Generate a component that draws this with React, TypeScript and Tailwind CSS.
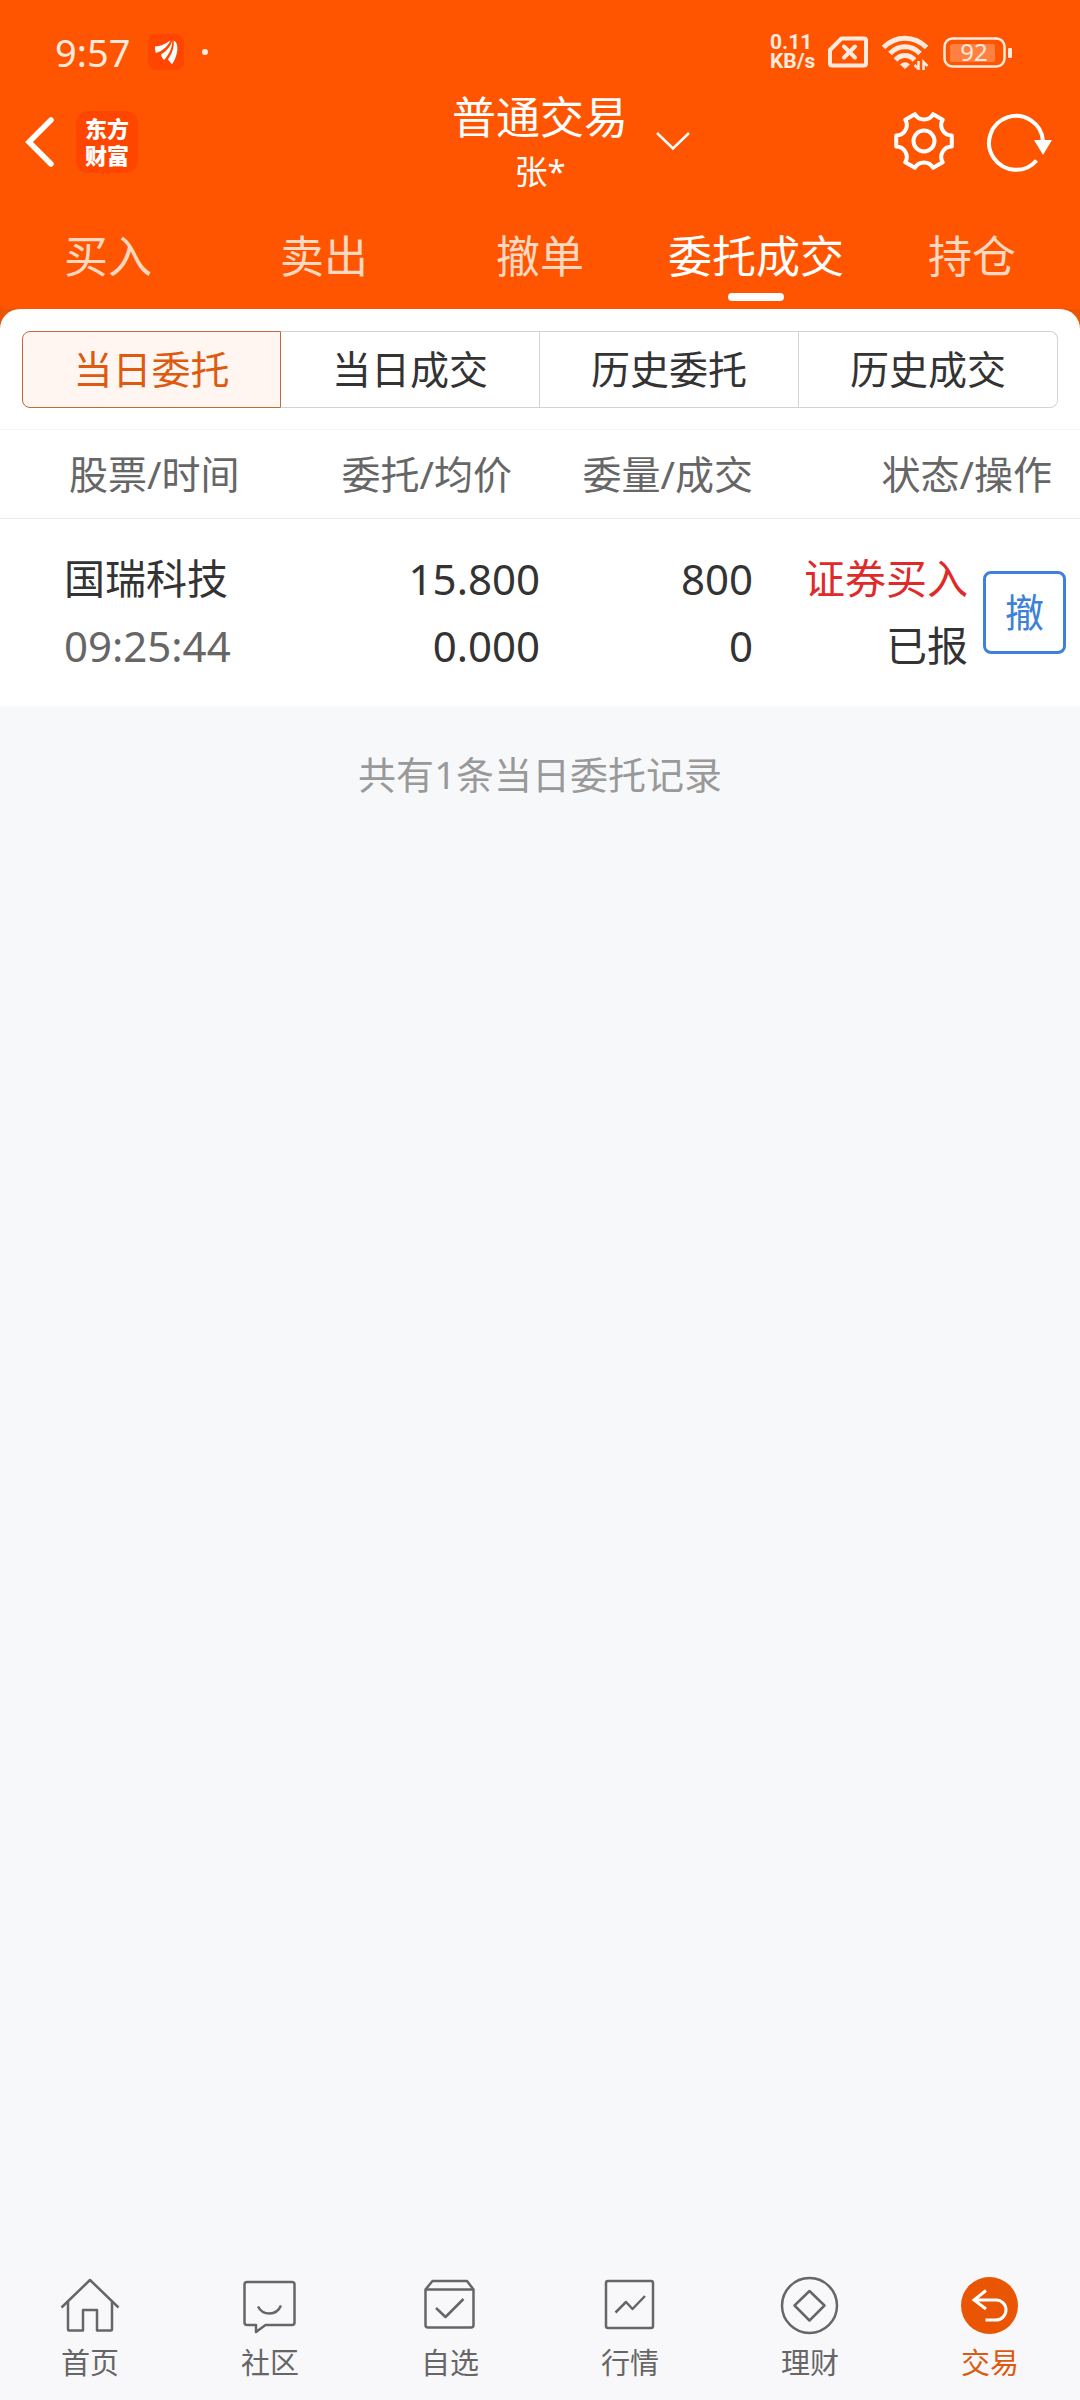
import type { ReactNode } from "react"
import clsx from "clsx"

interface NavItem {
  label: string;
  icon: ReactNode;
}

interface Order {
  name: string;
  time: string;
  price: string;
  avgPrice: string;
  amount: number;
  filled: number;
  side: string;
  status: string;
}

const TABS = ["买入", "卖出", "撤单", "委托成交", "持仓"]
const SEGMENTS = ["当日委托", "当日成交", "历史委托", "历史成交"]

const ORDERS: Order[] = [
  {
    name: "国瑞科技",
    time: "09:25:44",
    price: "15.800",
    avgPrice: "0.000",
    amount: 800,
    filled: 0,
    side: "证券买入",
    status: "已报",
  },
]

const NAV_ITEMS: NavItem[] = [
  {
    label: "首页",
    icon: (
      <>
        <path d="M1.500 32.500 30 5l28.500 27.500" />
        <path d="M8 27v27.500q0 1 1 1h14V35h14v20.500h14q1 0 1-1V27" />
      </>
    ),
  },
  {
    label: "社区",
    icon: (
      <>
        <path d="M7 7h45q2.500 0 2.500 2.500v38q0 2.500-2.500 2.500H25.500l-9.500 7v-7H7Q4.500 50 4.500 47.500v-38Q4.500 7 7 7z" />
        <path d="M18 31.500q3.500 7 11.500 7t11.500-8" />
      </>
    ),
  },
  {
    label: "自选",
    icon: (
      <>
        <path d="M5.500 14.500 12.500 6h34.500l6.500 8.500V50q0 2.500-2.500 2.500H8Q5.500 52.500 5.500 50z" />
        <path d="M5.500 14.500h48M16 33l9.500 9L43.500 24" />
      </>
    ),
  },
  {
    label: "行情",
    icon: (
      <>
        <rect x="6" y="6" width="47" height="47" rx="2" />
        <path d="m15.500 37.500 10.500-10.500 6.500 7 12.500-13" />
      </>
    ),
  },
  {
    label: "理财",
    icon: (
      <>
        <circle cx="29.500" cy="30.500" r="27.500" />
        <path d="m29.500 16 15 14.500-15 15-15-15z" />
      </>
    ),
  },
  {
    label: "交易",
    icon: (
      <>
        <circle cx="29.500" cy="30.500" r="28.500" fill="#ea5504" stroke="none" />
        <path
          d="M25.500 45h10.500a10 10 0 0 0 0-20H14M26 15.500l-12 9.500 12 9"
          stroke="#fff"
          strokeWidth="3"
          strokeLinejoin="miter"
        />
      </>
    ),
  },
]

function StatusBar() {
  return (
    <div className="flex h-[86px] items-center justify-between pt-[18px] pr-[67px] pl-[55px] text-[#ffeadd]">
      <div className="flex items-center">
        <span className="text-[38px] leading-[40px]">9:57</span>
        <svg className="ml-[18px] size-9" viewBox="0 0 36 36" aria-hidden="true">
          <rect width="36" height="36" rx="8" fill="#ff4600" />
          <g fill="#fff">
            <path d="M7 12.500C12 12.500 18 9.500 22.500 6.500 20 12 15 17 8 19 7 17 6.800 15 7 12.500z" />
            <path d="M24.300 6.500C24.500 14 20.500 21.500 16 26 14.500 24.500 13.300 22.500 13 20.500 18 17.500 22.500 13 24.300 6.500z" />
            <path d="M25.800 6.500C28.500 8 29.800 11 29.300 16.500 28.500 22 26.500 27 24 30.300 22.500 28.500 21 27 20 25.300 24 20 26.300 13 25.800 6.500z" />
          </g>
        </svg>
        <span className="ml-[18px] size-1.5 rounded-full bg-current" />
      </div>

      <div className="flex items-center">
        <p className="w-[50px] font-[Roboto,sans-serif] text-[21px] leading-[19px] font-bold">0.11 KB/s</p>
        <svg className="ml-2 h-8 w-10" viewBox="0 0 40 32" fill="none" stroke="currentColor" strokeWidth="4" aria-hidden="true">
          <path d="M13.500 2.500H36q2 0 2 2v23q0 2-2 2H4q-2 0-2-2V14z" strokeLinejoin="round" />
          <path d="m16 10.500 11 11m0-11-11 11" strokeLinecap="round" />
        </svg>
        <svg className="ml-3.5 h-9 w-12" viewBox="0 0 48 36" fill="none" stroke="currentColor" strokeWidth="5" aria-hidden="true">
          <path d="M1.500 13.500Q10.500 4.200 23 4.200t21.500 9.300" />
          <path d="M8 19.500Q14.500 12.800 23 12.800t15 6.700" />
          <path d="M13.500 26Q17.500 21.500 23 21.500t9.500 4.500" />
          <path d="M18 30.500q5-4.500 10 0l-5 4.500z" fill="currentColor" stroke="none" />
          <path d="M36.500 27v8l-4-4M41.500 36v-8l4 4" strokeWidth="2.500" />
        </svg>
        <svg className="ml-[13px] h-8 w-[70px]" viewBox="0 0 70 32" aria-hidden="true">
          <rect x="1.500" y="2.500" width="60" height="28" rx="8" fill="none" stroke="currentColor" strokeWidth="2.500" />
          <rect x="7" y="8" width="45" height="18" rx="2" fill="#ff8040" />
          <rect x="65" y="12" width="4" height="10" rx="1" fill="currentColor" />
          <text x="31" y="25" textAnchor="middle" fontSize="24" fill="currentColor">92</text>
        </svg>
      </div>
    </div>
  )
}

function TitleBar() {
  return (
    <div className="grid h-28 grid-cols-[1fr_auto_1fr] items-center">
      <div className="flex items-center pl-6">
        <button type="button" aria-label="返回">
          <svg className="h-[52px] w-8" viewBox="0 0 32 52" fill="none" stroke="#fff" strokeWidth="5.500" strokeLinecap="round" strokeLinejoin="miter">
            <path d="M27 4 5 26l22 22" />
          </svg>
        </button>
        <div className="ml-5 flex size-[62px] flex-col items-center justify-center rounded-xl bg-[#ff4600] text-[22px] leading-[27px] font-black">
          <span>东方</span>
          <span>财富</span>
        </div>
      </div>

      <div className="text-center">
        <h1 className="text-[44px] leading-[60px]">普通交易</h1>
        <p className="text-[33px] leading-[50px]">张*</p>
      </div>

      <div className="flex items-center justify-between pr-7 pl-7">
        <button type="button" aria-label="切换账户">
          <svg className="h-5 w-[34px]" viewBox="0 0 34 20" fill="none" stroke="#fff" strokeWidth="2.500">
            <path d="m1 1 16 15.500L33 1" />
          </svg>
        </button>
        <div className="flex items-center gap-8">
          <button type="button" aria-label="设置">
            <svg className="size-[60px]" viewBox="0 0 60 60" fill="none" stroke="#fff" strokeWidth="4" strokeLinejoin="round">
              <path d="M57.800 34.500A10.500 10.500 0 0 0 48.700 50.300L39.100 55.800A10.500 10.500 0 0 0 20.900 55.800L11.300 50.300A10.500 10.500 0 0 0 2.200 34.500V23.500A10.500 10.500 0 0 0 11.300 7.700L20.900 2.200A10.500 10.500 0 0 0 39.100 2.200L48.700 7.700A10.500 10.500 0 0 0 57.800 23.500z" />
              <circle cx="30" cy="29" r="10.500" />
            </svg>
          </button>
          <button type="button" aria-label="刷新">
            <svg className="h-[60px] w-[66px]" viewBox="0 0 66 60" fill="none" stroke="#fff" strokeWidth="4">
              <path d="M57 29A27 27 0 1 0 50.500 48.500" />
              <path d="M48 28h18l-9 15z" fill="#fff" stroke="none" />
            </svg>
          </button>
        </div>
      </div>
    </div>
  )
}

function TradeTabs({ active }: { active: string }) {
  return (
    <nav className="grid grid-cols-5 pt-[30px] pb-2">
      {TABS.map((tab) => (
        <button
          key={tab}
          type="button"
          className={clsx(
            "flex flex-col items-center gap-[9px] text-[44px] leading-[56px]",
            tab === active ? "text-white" : "text-[#ffd8c2]"
          )}
        >
          {tab}
          <span className={clsx("h-2 w-14 rounded-full", tab === active && "bg-white")} />
        </button>
      ))}
    </nav>
  )
}

function SegmentedControl({ active }: { active: string }) {
  return (
    <div className="grid grid-cols-4 px-[22px] pt-[22px] pb-[21px]">
      {SEGMENTS.map((segment) => (
        <button
          key={segment}
          type="button"
          className={clsx(
            "h-[77px] border pb-px text-[39px] leading-[56px] first:rounded-l-lg last:rounded-r-lg",
            segment === active
              ? "border-[#bb6a38] bg-[#fff6f2] text-[#dd5a10]"
              : "border-l-0 border-[#d0d4d6] text-[#333333]"
          )}
        >
          {segment}
        </button>
      ))}
    </div>
  )
}

function OrderTable({ orders }: { orders: Order[] }) {
  return (
    <table className="w-full table-fixed border-t border-[#f5f5f5]">
      <colgroup>
        <col className="w-[27%]" />
        <col className="w-[23%]" />
        <col className="w-[20%]" />
        <col className="w-[30%]" />
      </colgroup>
      <thead>
        <tr className="h-[89px] border-b border-[#ebebeb] text-right text-[39px] leading-[56px] text-[#666666]">
          <th className="pl-[69px] text-left font-normal">股票/时间</th>
          <th className="pr-7 font-normal">委托/均价</th>
          <th className="pr-[3px] font-normal">委量/成交</th>
          <th className="pr-7 font-normal">状态/操作</th>
        </tr>
      </thead>
      <tbody>
        {orders.map((order) => (
          <tr key={order.time} className="h-[187px] text-right text-[42px] leading-[67px] text-[#333333]">
            <td className="pl-16 text-left">
              <div className="text-[41px]">{order.name}</div>
              <div className="text-[#666666]">{order.time}</div>
            </td>
            <td>
              <div>{order.price}</div>
              <div>{order.avgPrice}</div>
            </td>
            <td className="pr-[3px]">
              <div>{order.amount}</div>
              <div>{order.filled}</div>
            </td>
            <td>
              <div className="flex items-center justify-end gap-[15px] pr-3.5">
                <div className="text-[41px]">
                  <div className="text-[#e02a2a]">{order.side}</div>
                  <div>{order.status}</div>
                </div>
                <button
                  type="button"
                  className="size-[83px] rounded-lg border-3 border-[#3d82d8] text-[39px] leading-[56px] text-[#3d82d8]"
                >
                  撤
                </button>
              </div>
            </td>
          </tr>
        ))}
      </tbody>
    </table>
  )
}

function BottomNav({ active }: { active: string }) {
  return (
    <nav className="grid grid-cols-6 bg-[#f8f8fa] pb-[17px]">
      {NAV_ITEMS.map((item) => (
        <a
          key={item.label}
          href="#"
          className={clsx(
            "flex flex-col items-center gap-2 text-[29px] leading-[40px]",
            item.label === active ? "text-[#dd5a10]" : "text-[#666666]"
          )}
        >
          <svg
            className="size-[60px]"
            viewBox="0 0 60 60"
            fill="none"
            stroke="currentColor"
            strokeWidth="2.500"
            strokeLinejoin="round"
            aria-hidden="true"
          >
            {item.icon}
          </svg>
          {item.label}
        </a>
      ))}
    </nav>
  )
}

export default function App() {
  return (
    <div className="flex min-h-screen flex-col bg-[#f7f8fa] font-['Noto_Sans','Noto_Sans_CJK_SC',sans-serif]">
      <header className="bg-[#ff5500] text-white">
        <StatusBar />
        <TitleBar />
        <TradeTabs active="委托成交" />
      </header>

      <main className="flex-1">
        <div className="bg-[#e95504]">
          <section className="rounded-t-[20px] bg-white">
            <SegmentedControl active="当日委托" />
            <OrderTable orders={ORDERS} />
          </section>
        </div>
        <p className="pt-10 text-center text-[38px] leading-[56px] text-[#999999]">
          共有{ORDERS.length}条当日委托记录
        </p>
      </main>

      <BottomNav active="交易" />
    </div>
  )
}
